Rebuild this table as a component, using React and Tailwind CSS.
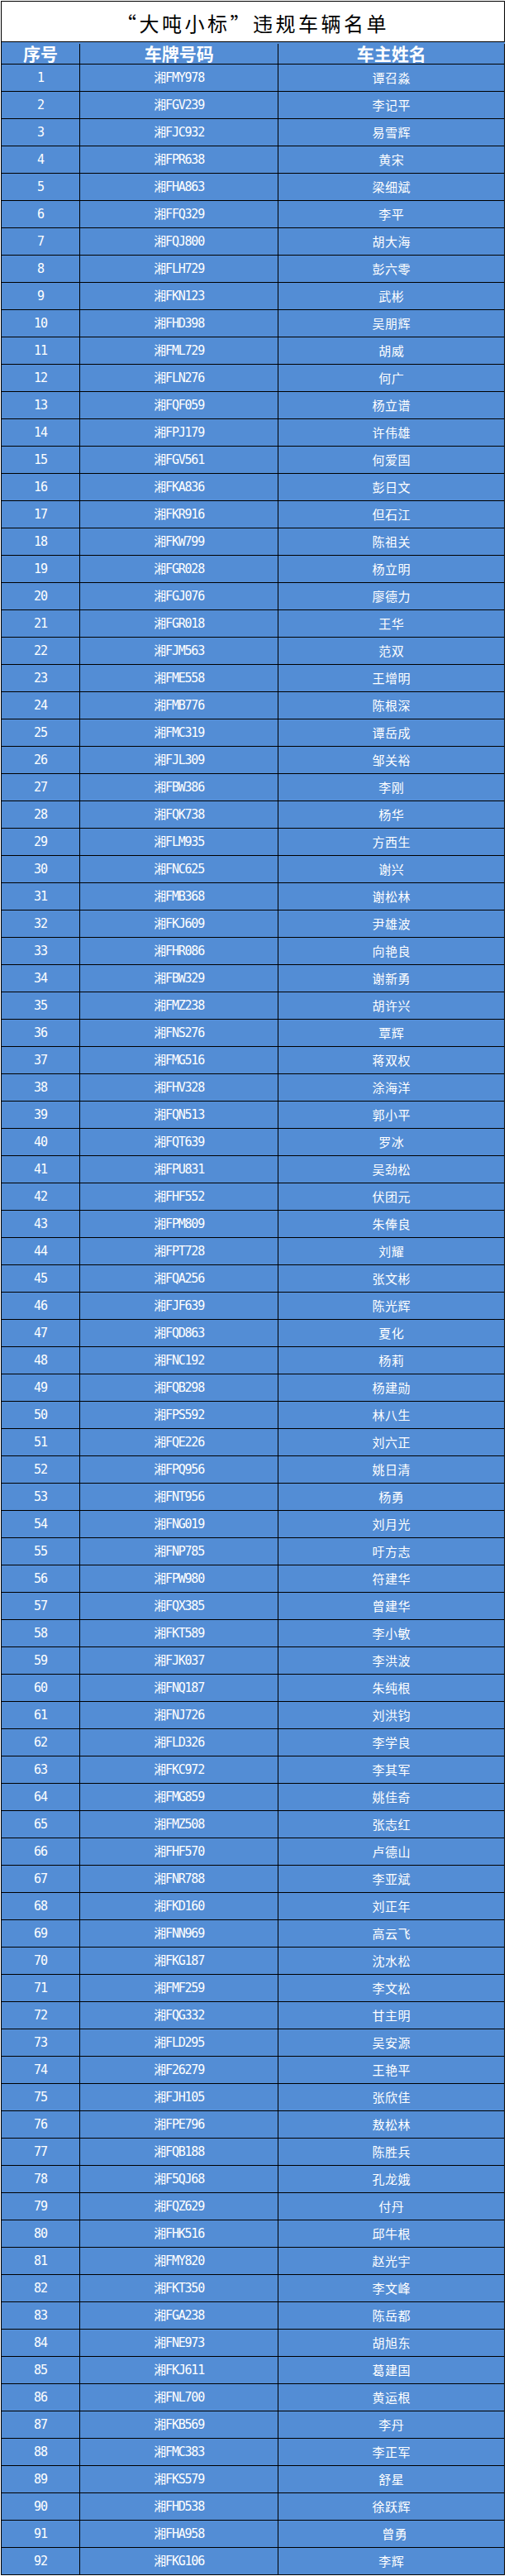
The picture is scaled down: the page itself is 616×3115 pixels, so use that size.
const rows = [
  ["FMY978", "谭召淼"],
  ["FGV239", "李记平"],
  ["FJC932", "易雪辉"],
  ["FPR638", "黄宋"],
  ["FHA863", "梁细斌"],
  ["FFQ329", "李平"],
  ["FQJ800", "胡大海"],
  ["FLH729", "彭六零"],
  ["FKN123", "武彬"],
  ["FHD398", "吴朋辉"],
  ["FML729", "胡威"],
  ["FLN276", "何广"],
  ["FQF059", "杨立谱"],
  ["FPJ179", "许伟雄"],
  ["FGV561", "何爱国"],
  ["FKA836", "彭日文"],
  ["FKR916", "但石江"],
  ["FKW799", "陈祖关"],
  ["FGR028", "杨立明"],
  ["FGJ076", "廖德力"],
  ["FGR018", "王华"],
  ["FJM563", "范双"],
  ["FME558", "王增明"],
  ["FMB776", "陈根深"],
  ["FMC319", "谭岳成"],
  ["FJL309", "邹关裕"],
  ["FBW386", "李刚"],
  ["FQK738", "杨华"],
  ["FLM935", "方西生"],
  ["FNC625", "谢兴"],
  ["FMB368", "谢松林"],
  ["FKJ609", "尹雄波"],
  ["FHR086", "向艳良"],
  ["FBW329", "谢新勇"],
  ["FMZ238", "胡许兴"],
  ["FNS276", "覃辉"],
  ["FMG516", "蒋双权"],
  ["FHV328", "涂海洋"],
  ["FQN513", "郭小平"],
  ["FQT639", "罗冰"],
  ["FPU831", "吴劲松"],
  ["FHF552", "伏团元"],
  ["FPM809", "朱俸良"],
  ["FPT728", "刘耀"],
  ["FQA256", "张文彬"],
  ["FJF639", "陈光辉"],
  ["FQD863", "夏化"],
  ["FNC192", "杨莉"],
  ["FQB298", "杨建勋"],
  ["FPS592", "林八生"],
  ["FQE226", "刘六正"],
  ["FPQ956", "姚日清"],
  ["FNT956", "杨勇"],
  ["FNG019", "刘月光"],
  ["FNP785", "吁方志"],
  ["FPW980", "符建华"],
  ["FQX385", "曾建华"],
  ["FKT589", "李小敏"],
  ["FJK037", "李洪波"],
  ["FNQ187", "朱纯根"],
  ["FNJ726", "刘洪钧"],
  ["FLD326", "李学良"],
  ["FKC972", "李其军"],
  ["FMG859", "姚佳奇"],
  ["FMZ508", "张志红"],
  ["FHF570", "卢德山"],
  ["FNR788", "李亚斌"],
  ["FKD160", "刘正年"],
  ["FNN969", "高云飞"],
  ["FKG187", "沈水松"],
  ["FMF259", "李文松"],
  ["FQG332", "甘主明"],
  ["FLD295", "吴安源"],
  ["F26279", "王艳平"],
  ["FJH105", "张欣佳"],
  ["FPE796", "敖松林"],
  ["FQB188", "陈胜兵"],
  ["F5QJ68", "孔龙娥"],
  ["FQZ629", "付丹"],
  ["FHK516", "邱牛根"],
  ["FMY820", "赵光宇"],
  ["FKT350", "李文峰"],
  ["FGA238", "陈岳都"],
  ["FNE973", "胡旭东"],
  ["FKJ611", "葛建国"],
  ["FNL700", "黄运根"],
  ["FKB569", "李丹"],
  ["FMC383", "李正军"],
  ["FKS579", "舒星"],
  ["FHD538", "徐跃辉"],
  ["FHA958", "曾勇"],
  ["FKG106", "李辉"],
];

const cell = "flex items-center justify-center border-r border-b border-black";
const mono = "font-['DejaVu_Sans_Mono','Noto_Sans_CJK_SC',monospace] text-[15px] tracking-[-1.2px]";

export default function App() {
  return (
    <div className="bg-white pl-px pt-px w-[616px] min-h-[3115px]">
      <div className="w-[610px] border-l border-t border-black">
        {/* 标题 */}
        <div className="h-[49px] flex items-center justify-center border-r border-b border-black pt-1 font-['Noto_Sans_CJK_SC',sans-serif] text-[24px] tracking-[3.5px] text-black">
          “大吨小标”违规车辆名单
        </div>

        {/* 表头 */}
        <div className="flex h-[27px] bg-[#538dd5] text-white font-['Noto_Sans_CJK_SC',sans-serif] text-[21px] font-bold pt-0.5">
          <div className={`${cell} w-[95px]`}>序号</div>
          <div className={`${cell} w-[241px]`}>车牌号码</div>
          <div className={`${cell} w-[274px]`}>车主姓名</div>
        </div>

        {/* 数据行 */}
        {rows.map(([plate, name], i) => (
          <div key={plate} className="flex h-[33px] bg-[#538dd5] text-white">
            <div className={`${cell} w-[95px] ${mono}`}>{i + 1}</div>
            <div className={`${cell} w-[241px] ${mono}`}>湘{plate}</div>
            <div
              className={`${cell} w-[274px] font-['Noto_Sans_CJK_SC',sans-serif] text-[15px] tracking-[0.5px] ${
                i === 90 ? "pl-2" : ""
              }`}
            >
              {name}
            </div>
          </div>
        ))}
      </div>
    </div>
  );
}
